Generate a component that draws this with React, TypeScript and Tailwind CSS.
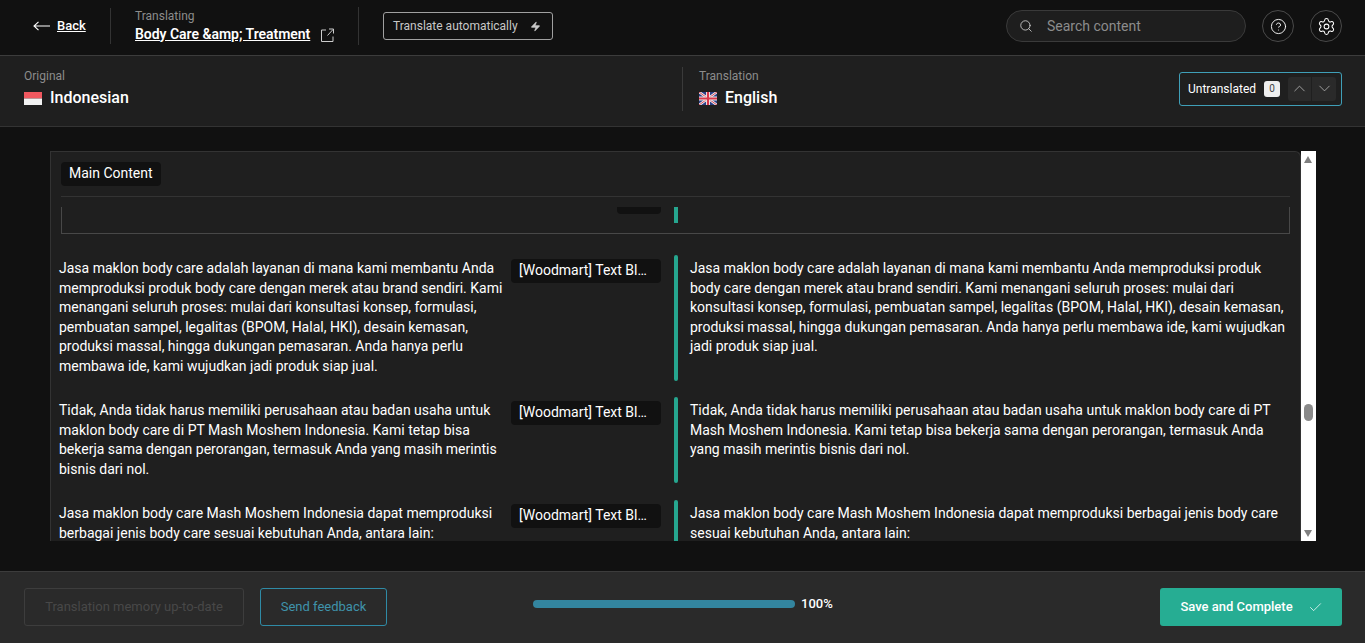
import React from "react";
import { Zap, Search, CircleHelp, Settings, ChevronUp, ChevronDown, Check } from "lucide-react";

const rows = [
    "Jasa maklon body care adalah layanan di mana kami membantu Anda memproduksi produk body care dengan merek atau brand sendiri. Kami menangani seluruh proses: mulai dari konsultasi konsep, formulasi, pembuatan sampel, legalitas (BPOM, Halal, HKI), desain kemasan, produksi massal, hingga dukungan pemasaran. Anda hanya perlu membawa ide, kami wujudkan jadi produk siap jual.",
    "Tidak, Anda tidak harus memiliki perusahaan atau badan usaha untuk maklon body care di PT Mash Moshem Indonesia. Kami tetap bisa bekerja sama dengan perorangan, termasuk Anda yang masih merintis bisnis dari nol.",
    "Jasa maklon body care Mash Moshem Indonesia dapat memproduksi berbagai jenis body care sesuai kebutuhan Anda, antara lain:",
];

const IndonesiaFlag = () => (
    <svg width="18" height="13" viewBox="0 0 18 13" className="shrink-0">
        <rect width="18" height="6.5" fill="#f0585f" />
        <rect y="6.5" width="18" height="6.5" fill="#f2f2f2" />
    </svg>
);

const UkFlag = () => (
    <svg width="18" height="13" viewBox="0 0 18 13" className="shrink-0">
        <rect width="18" height="13" fill="#2b3f86" />
        <path d="M0 0L18 13M18 0L0 13" stroke="#eee" strokeWidth="2.6" />
        <path d="M0 0L18 13M18 0L0 13" stroke="#d8374a" strokeWidth="0.9" />
        <path d="M9 0V13M0 6.5H18" stroke="#eee" strokeWidth="4" />
        <path d="M9 0V13M0 6.5H18" stroke="#d8374a" strokeWidth="2.2" />
    </svg>
);

const BackArrow = () => (
    <svg width="17" height="10" viewBox="0 0 17 10" fill="none" stroke="currentColor" strokeWidth="1.1" className="shrink-0">
        <path d="M17 5H1M5.5 0.8L1 5L5.5 9.2" />
    </svg>
);

const OpenIcon = () => (
    <svg width="13" height="14" viewBox="0 0 13 14" fill="none" stroke="#cccccc" strokeWidth="1" className="shrink-0">
        <path d="M5 2H0.5V13.5H12V8.5M6.5 7.5L12 1.5M8 1H12.5V5.5" />
    </svg>
);

const Row = ({ text }: { text: string }) => (
    <div className="flex items-stretch mb-[16.5px]">
        <p className="w-[446px] ml-[8px] pt-[4px] pb-[4px] shrink-0 text-[14px] leading-[19.6px] text-white">{text}</p>
        <div className="w-[150px] ml-[6px] mt-[4px] h-[24px] shrink-0 rounded bg-[#111111] px-2 text-[14px] leading-[22px] text-white truncate">
            [Woodmart] Text Block
        </div>
        <div className="w-[4px] ml-[13px] shrink-0 rounded-sm bg-[#26a68f]" />
        <p className="w-[600px] ml-[12px] pt-[4px] shrink-0 text-[14px] leading-[19.6px] text-white">{text}</p>
    </div>
);

export default function App() {
    return (
        <div className="flex flex-col h-[643px] overflow-hidden bg-[#111111] text-white font-['Roboto',sans-serif]">
            {/* top bar */}
            <header className="flex items-center h-[56px] shrink-0 border-b border-[#3c3c3c] pb-[3px] pl-[33px] pr-[23px]">
                <a className="flex items-center gap-[7px] w-[77px] text-[13px] font-medium">
                    <BackArrow />
                    <span className="underline">Back</span>
                </a>
                <div className="w-px h-[36px] bg-[#333333]" />
                <div className="ml-[24px] w-[200px]">
                    <div className="text-[12px] leading-[14px] text-[#8c8c8c] -mt-[1px]">Translating</div>
                    <div className="flex items-center mt-[2px] whitespace-nowrap">
                        <span className="text-[14px] leading-[18px] font-semibold tracking-[-0.03px] underline">Body Care &amp;amp; Treatment</span>
                        <span className="ml-[11px] mt-[2px]"><OpenIcon /></span>
                    </div>
                </div>
                <div className="w-px h-[38px] bg-[#333333] ml-[23px]" />
                <button className="flex items-center justify-between ml-[24px] w-[170px] h-[28px] rounded-[3px] border border-[#a0a0a0] pl-[9px] pr-[11px] text-[12px] text-[#c8c8c8]">
                    Translate automatically
                    <Zap size={11} fill="#c8c8c8" strokeWidth={1} />
                </button>
                <div className="flex items-center ml-auto w-[240px] h-[32px] rounded-full border border-[#3a3a3a] bg-[#1e1e1e] pl-[12px]">
                    <Search size={14} strokeWidth={1.5} className="text-[#cccccc]" />
                    <span className="ml-[14px] text-[14px] text-[#8c8c8c]">Search content</span>
                </div>
                <div className="flex items-center justify-center w-[32px] h-[32px] ml-[16px] rounded-full border border-[#4a4a4a]">
                    <CircleHelp size={17} strokeWidth={1.3} />
                </div>
                <div className="flex items-center justify-center w-[32px] h-[32px] ml-[16px] rounded-full border border-[#4a4a4a]">
                    <Settings size={19} strokeWidth={1.3} />
                </div>
            </header>

            {/* languages */}
            <div className="flex items-center h-[71px] shrink-0 border-b border-[#333333] bg-[#1f1f1f] pb-[4px] pl-[24px] pr-[23px]">
                <div className="w-[658px]">
                    <div className="text-[12px] leading-[14px] text-[#8c8c8c]">Original</div>
                    <div className="flex items-center gap-[8px] mt-[4px]">
                        <IndonesiaFlag />
                        <span className="text-[16px] leading-[22px] font-medium">Indonesian</span>
                    </div>
                </div>
                <div className="w-px h-[44px] bg-[#3a3a3a]" />
                <div className="ml-[16px]">
                    <div className="text-[12px] leading-[14px] text-[#8c8c8c]">Translation</div>
                    <div className="flex items-center gap-[8px] mt-[4px]">
                        <UkFlag />
                        <span className="text-[16px] leading-[22px] font-medium">English</span>
                    </div>
                </div>
                <div className="flex items-center ml-auto -mt-[1px] w-[163px] h-[34px] rounded-[3px] border border-[#3f9fb8] pl-[8px] pr-[4px]">
                    <span className="text-[12px]">Untranslated</span>
                    <span className="flex items-center justify-center w-[16px] h-[16px] ml-[8px] rounded-[3px] bg-[#eeeeee] text-[10px] text-[#444444]">0</span>
                    <div className="flex ml-[8px]">
                        <div className="flex items-center justify-center w-[24px] h-[24px] rounded-l-[3px] bg-[#2a2a2a] border-r border-[#1f1f1f]">
                            <ChevronUp size={19} strokeWidth={1} className="text-[#bbbbbb]" />
                        </div>
                        <div className="flex items-center justify-center w-[24px] h-[24px] rounded-r-[3px] bg-[#2a2a2a]">
                            <ChevronDown size={19} strokeWidth={1} className="text-[#bbbbbb]" />
                        </div>
                    </div>
                </div>
            </div>

            {/* content */}
            <main className="flex-1 min-h-0 pt-[24px] pl-[50px]">
                <div className="flex h-[390px] w-[1266px]">
                    <div className="w-[1251px] overflow-hidden bg-[#1f1f1f] border-l border-t border-r border-[#333333] rounded-tr-md">
                        <div className="ml-[10px] mt-[10px] inline-block h-[24px] rounded bg-[#111111] px-2 text-[14px] leading-[23px]">Main Content</div>
                        <div className="ml-[10px] mr-[10px] mt-[10px] h-px bg-[#333333]" />
                        <div className="flex ml-[10px] mr-[10px] mt-[10px] h-[27px] border-l border-r border-b border-[#484848]">
                            <div className="ml-[555px] w-[44px] h-[7px] rounded-b bg-[#111111]" />
                            <div className="ml-[13px] w-[4px] h-[16px] bg-[#26a68f]" />
                        </div>
                        <div className="mt-[21px]">
                            {rows.map((text, i) => (
                                <Row key={i} text={text} />
                            ))}
                        </div>
                    </div>
                    {/* scrollbar */}
                    <div className="relative w-[15px] bg-white">
                        <div className="absolute left-[3px] top-[5px] w-0 h-0 border-l-[4.5px] border-r-[4.5px] border-b-[7px] border-l-transparent border-r-transparent border-b-[#7f7f7f]" />
                        <div className="absolute left-[3px] top-[253px] w-[9px] h-[17px] rounded-full bg-[#8a8a8a]" />
                        <div className="absolute left-[3px] bottom-[4px] w-0 h-0 border-l-[4.5px] border-r-[4.5px] border-t-[7px] border-l-transparent border-r-transparent border-t-[#7f7f7f]" />
                    </div>
                </div>
            </main>

            {/* footer */}
            <footer className="flex items-center h-[72px] shrink-0 border-t border-[#3c3c3c] bg-[#2a2a2a] pb-[1px] pl-[24px] pr-[23px]">
                <button className="w-[220px] h-[38px] rounded-[3px] border border-[#3d3d3d] text-[13px] text-[#484848]">
                    Translation memory up-to-date
                </button>
                <button className="w-[127px] h-[38px] ml-[16px] rounded-[3px] border border-[#2f8ba6] text-[13px] text-[#3f93ab]">
                    Send feedback
                </button>
                <div className="flex items-center ml-[146px] -mt-[6px]">
                    <div className="w-[262px] h-[8px] rounded-full bg-[#33859f]" />
                    <span className="ml-[6px] text-[13px] font-medium">100%</span>
                </div>
                <button className="flex items-center justify-center gap-[15px] ml-auto pl-[1px] w-[182px] h-[38px] rounded-[3px] bg-[#26ad93] text-[13px] font-medium">
                    Save and Complete
                    <Check size={15} strokeWidth={1.2} />
                </button>
            </footer>
        </div>
    );
}
